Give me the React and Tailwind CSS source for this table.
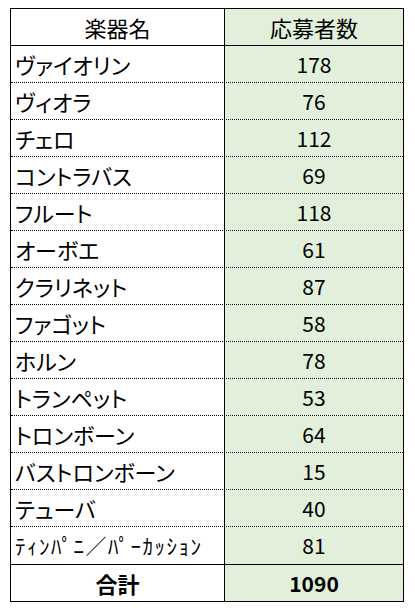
const ROWS = [
  ['ヴァイオリン', 178],
  ['ヴィオラ', 76],
  ['チェロ', 112],
  ['コントラバス', 69],
  ['フルート', 118],
  ['オーボエ', 61],
  ['クラリネット', 87],
  ['ファゴット', 58],
  ['ホルン', 78],
  ['トランペット', 53],
  ['トロンボーン', 64],
  ['バストロンボーン', 15],
  ['テューバ', 40],
  ['ﾃｨﾝﾊﾟﾆ／ﾊﾟｰｶｯｼｮﾝ', 81],
]

const font = { fontFamily: '"Noto Sans CJK JP", "Liberation Sans", sans-serif' }

export default function App() {
  return (
    <div className="min-h-[610px] w-[415px] bg-white pl-[10px] pt-[8px]" style={font}>
      <div className="w-[394px] border-[1.5px] border-black text-[21px] leading-none text-black">
        <div className="grid h-[37px] grid-cols-[214px_1fr] border-b-[1.5px] border-black text-[22px]">
          <div className="flex items-center justify-center border-r-[1.5px] border-black">楽器名</div>
          <div className="flex items-center justify-center bg-[#e2efda]">応募者数</div>
        </div>
        {ROWS.map(([name, n], i) => (
          <div
            key={name}
            className={
              i < ROWS.length - 1
                ? 'grid h-[37px] grid-cols-[214px_1fr] border-b border-dotted border-black'
                : 'grid h-[37px] grid-cols-[214px_1fr]'
            }
          >
            <div
              className={
                i < ROWS.length - 1
                  ? "flex items-center border-r-[1.5px] border-black pl-[4px] text-[22px] [font-feature-settings:'palt']"
                  : 'flex items-center border-r-[1.5px] border-black pl-[4px] text-[21px] tracking-[1.5px]'
              }
            >
              {name}
            </div>
            <div className="flex items-center justify-center bg-[#e2efda]">{n}</div>
          </div>
        ))}
        <div className="grid h-[37px] grid-cols-[214px_1fr] border-t-[1.5px] border-black font-bold">
          <div className="flex items-center justify-center border-r-[1.5px] border-black text-[22px]">合計</div>
          <div className="flex items-center justify-center bg-[#e2efda]">1090</div>
        </div>
      </div>
    </div>
  )
}
